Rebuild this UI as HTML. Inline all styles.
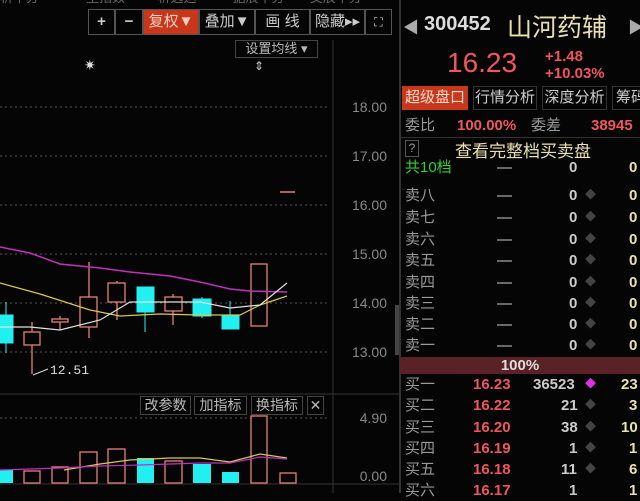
<!DOCTYPE html>
<html><head><meta charset="utf-8"><style>
*{margin:0;padding:0;box-sizing:border-box}
body{width:640px;height:493px;background:#050505;overflow:hidden;position:relative;font-family:"Liberation Sans","Noto Sans CJK SC",sans-serif;color:#ccc}
.a{position:absolute;white-space:nowrap}
.btn{position:absolute;top:9px;height:26px;border:1px solid #555;color:#ccc;font-size:15px;text-align:center;line-height:24px}
.ax{position:absolute;left:345px;width:42px;text-align:right;font-size:14px;color:#888}
.r{position:absolute;left:403px;width:237px;height:21px;font-size:15px;line-height:21px}
.r span{position:absolute}
.r .d{left:182px;color:#444;font-size:11px}
</style></head><body>
<div class="a" style="left:0;top:-13px;font-size:13px;color:#666">析平分 &nbsp;&nbsp;&nbsp;&nbsp;&nbsp;&nbsp;&nbsp;&nbsp;&nbsp;&nbsp;&nbsp; 型指数 &nbsp;&nbsp;&nbsp;&nbsp;&nbsp;&nbsp;&nbsp; 析选运 &nbsp;&nbsp;&nbsp;&nbsp;&nbsp;&nbsp;&nbsp;&nbsp; 据展平分 &nbsp;&nbsp;&nbsp;&nbsp;&nbsp; 交展平分</div>
<div class="btn" style="left:88px;width:27px;font-weight:bold">+</div>
<div class="btn" style="left:115px;width:28px;font-weight:bold">−</div>
<div class="btn" style="left:143px;width:56px;background:#c8361c;color:#f5d0c0">复权▼</div>
<div class="btn" style="left:199px;width:56px">叠加▼</div>
<div class="btn" style="left:255px;width:55px">画 线</div>
<div class="btn" style="left:310px;width:55px">隐藏▸▸</div>
<div class="btn" style="left:365px;width:27px;font-size:12px">⛶</div>
<div class="a" style="left:235px;top:40px;width:83px;height:18px;border:1px solid #444;font-size:13px;line-height:16px;text-align:center;color:#bbb">设置均线 ▾</div>
<svg class="a" style="left:0;top:0" width="400" height="493">
<g stroke="#555" stroke-dasharray="2,3"><line x1="0" y1="107" x2="328" y2="107"/><line x1="0" y1="156" x2="328" y2="156"/><line x1="0" y1="205" x2="328" y2="205"/><line x1="0" y1="254" x2="328" y2="254"/><line x1="0" y1="303" x2="328" y2="303"/><line x1="0" y1="352" x2="328" y2="352"/><line x1="0" y1="418" x2="328" y2="418"/></g>
<line x1="333" y1="40" x2="333" y2="493" stroke="#333"/>
<line x1="0" y1="394" x2="400" y2="394" stroke="#333"/>
<line x1="0" y1="484" x2="400" y2="484" stroke="#333"/>
<rect x="395" y="305" width="4" height="50" fill="#444"/>
<text x="84" y="70" fill="#ddd" font-size="14">✷</text>
<text x="254" y="70" fill="#ccc" font-size="12">⇕</text>
<line x1="280" y1="192" x2="295" y2="192" stroke="#e7807a" stroke-width="1.5"/>
<g stroke="#e7807a" fill="none" stroke-width="1.3">
<line x1="32" y1="322" x2="32" y2="374"/><rect x="24" y="332" width="16" height="13" fill="#050505"/>
<line x1="60" y1="316" x2="60" y2="330"/><rect x="52" y="319" width="16" height="3" fill="#050505"/>
<line x1="89" y1="262" x2="89" y2="338"/><rect x="80" y="297" width="17" height="30" fill="#050505"/>
<line x1="117" y1="281" x2="117" y2="320"/><rect x="108" y="283" width="17" height="19" fill="#050505"/>
<line x1="173" y1="294" x2="173" y2="325"/><rect x="165" y="297" width="17" height="14" fill="#050505"/>
<rect x="251" y="264" width="16" height="62" fill="#050505"/>
</g>
<g fill="#22f0f0" stroke="#22f0f0">
<line x1="6" y1="302" x2="6" y2="353"/><rect x="0" y="315" width="13" height="28"/>
<line x1="145" y1="287" x2="145" y2="332"/><rect x="137" y="287" width="17" height="25"/>
<line x1="202" y1="297" x2="202" y2="318"/><rect x="193" y="299" width="18" height="17"/>
<line x1="230" y1="301" x2="230" y2="329"/><rect x="222" y="316" width="17" height="13"/>
</g>
<polyline fill="none" stroke="#c030c0" stroke-width="1.5" points="0,247 30,253 60,264 100,268 130,272 170,276 200,282 230,289 250,291 287,292"/>
<polyline fill="none" stroke="#d8c850" stroke-width="1.2" points="0,283 40,294 90,310 120,316 160,314 200,315 240,315 260,305 287,296"/>
<polyline fill="none" stroke="#e0e0e0" stroke-width="1.2" points="0,327 30,327 60,330 100,320 130,302 170,302 200,302 230,308 260,305 287,283"/>
<line x1="33" y1="375" x2="48" y2="369" stroke="#ddd"/>
<text x="50" y="374" fill="#ddd" font-size="13" font-family="Liberation Mono">12.51</text>
<g stroke="#e7807a" fill="#050505" stroke-width="1.3">
<rect x="24" y="471" width="16" height="12"/><rect x="52" y="467" width="16" height="16"/><rect x="80" y="452" width="17" height="31"/><rect x="108" y="449" width="17" height="34"/><rect x="165" y="461" width="17" height="22"/><rect x="251" y="416" width="16" height="67"/><rect x="280" y="473" width="16" height="10"/>
</g>
<g fill="#22f0f0"><rect x="0" y="470" width="13" height="13"/><rect x="137" y="458" width="17" height="25"/><rect x="193" y="464" width="18" height="19"/><rect x="222" y="472" width="17" height="11"/></g>
<polyline fill="none" stroke="#d8c850" stroke-width="1.2" points="64,470 100,464 130,460 170,458 200,458 230,462 260,454 287,458"/>
<polyline fill="none" stroke="#c030c0" stroke-width="1.2" points="0,470 60,468 100,466 140,465 200,463 230,463 260,457 287,459"/>
</svg>
<div class="ax" style="top:99px">18.00</div><div class="ax" style="top:148px">17.00</div><div class="ax" style="top:197px">16.00</div><div class="ax" style="top:246px">15.00</div><div class="ax" style="top:295px">14.00</div><div class="ax" style="top:344px">13.00</div><div class="ax" style="top:410px">4.90</div><div class="ax" style="top:468px">0.00</div>
<div class="a" style="left:140px;top:396px;width:51px;height:19px;border:1px solid #444;font-size:14px;line-height:17px;text-align:center;color:#bbb">改参数</div>
<div class="a" style="left:194px;top:396px;width:53px;height:19px;border:1px solid #444;font-size:14px;line-height:17px;text-align:center;color:#bbb">加指标</div>
<div class="a" style="left:251px;top:396px;width:52px;height:19px;border:1px solid #444;font-size:14px;line-height:17px;text-align:center;color:#bbb">换指标</div>
<div class="a" style="left:307px;top:396px;width:17px;height:19px;border:1px solid #444;font-size:14px;line-height:17px;text-align:center;color:#bbb">✕</div>
<div class="a" style="left:399px;top:0;width:2px;height:493px;background:#333"></div>
<div class="a" style="left:403px;top:14px;color:#aaa;font-size:16px">◀</div>
<div class="a" style="left:628px;top:14px;color:#aaa;font-size:16px">▶</div>
<div class="a" style="left:424px;top:13px;font-size:20px;color:#ddd;font-weight:bold">300452</div>
<div class="a" style="left:507px;top:8px;font-size:25px;color:#e8e0b0">山河药辅</div>
<div class="a" style="left:447px;top:47px;font-size:28px;color:#f05560">16.23</div>
<div class="a" style="left:545px;top:48px;font-size:15px;color:#f05560;font-weight:bold;line-height:17px">+1.48<br>+10.03%</div>
<div class="a" style="left:402px;top:86px;width:66px;height:24px;background:#c8361c;color:#f5e0d0;font-size:15px;line-height:24px;text-align:center">超级盘口</div>
<div class="a" style="left:473px;top:86px;width:64px;height:24px;border:1px solid #333;font-size:15px;line-height:22px;text-align:center">行情分析</div>
<div class="a" style="left:542px;top:86px;width:65px;height:24px;border:1px solid #333;font-size:15px;line-height:22px;text-align:center">深度分析</div>
<div class="a" style="left:612px;top:86px;width:40px;height:24px;border:1px solid #333;font-size:15px;line-height:22px;padding-left:3px">筹码</div>
<div class="r" style="top:115px"><span style="left:2px;color:#999">委比</span><span style="left:54px;color:#f05560;font-weight:bold">100.00%</span><span style="left:128px;color:#999">委差</span><span style="left:188px;color:#f05560;font-weight:bold">38945</span></div>
<div class="a" style="left:400px;top:137px;width:240px;height:1px;background:#333"></div>
<div class="a" style="left:405px;top:140px;width:14px;height:17px;border:1px solid #555;font-size:12px;text-align:center;color:#999">?</div>
<div class="a" style="left:455px;top:137px;font-size:17px;color:#e8e0b0">查看完整档买卖盘</div>
<div class="r" style="top:157px"><span style="left:2px;color:#3c3">共10档</span><span style="left:94px">—</span><span style="left:166px;font-weight:bold">0</span><span style="left:226px;color:#e8e0b0;font-weight:bold">0</span></div>
<div class="r" style="top:185px"><span style="left:2px;color:#999">卖八</span><span style="left:94px">—</span><span style="left:166px;font-weight:bold">0</span><span class="d">◆</span><span style="left:226px;color:#e8e0b0;font-weight:bold">0</span></div>
<div class="r" style="top:207px"><span style="left:2px;color:#999">卖七</span><span style="left:94px">—</span><span style="left:166px;font-weight:bold">0</span><span class="d">◆</span><span style="left:226px;color:#e8e0b0;font-weight:bold">0</span></div>
<div class="r" style="top:229px"><span style="left:2px;color:#999">卖六</span><span style="left:94px">—</span><span style="left:166px;font-weight:bold">0</span><span class="d">◆</span><span style="left:226px;color:#e8e0b0;font-weight:bold">0</span></div>
<div class="r" style="top:250px"><span style="left:2px;color:#999">卖五</span><span style="left:94px">—</span><span style="left:166px;font-weight:bold">0</span><span class="d">◆</span><span style="left:226px;color:#e8e0b0;font-weight:bold">0</span></div>
<div class="r" style="top:272px"><span style="left:2px;color:#999">卖四</span><span style="left:94px">—</span><span style="left:166px;font-weight:bold">0</span><span class="d">◆</span><span style="left:226px;color:#e8e0b0;font-weight:bold">0</span></div>
<div class="r" style="top:293px"><span style="left:2px;color:#999">卖三</span><span style="left:94px">—</span><span style="left:166px;font-weight:bold">0</span><span class="d">◆</span><span style="left:226px;color:#e8e0b0;font-weight:bold">0</span></div>
<div class="r" style="top:314px"><span style="left:2px;color:#999">卖二</span><span style="left:94px">—</span><span style="left:166px;font-weight:bold">0</span><span class="d">◆</span><span style="left:226px;color:#e8e0b0;font-weight:bold">0</span></div>
<div class="r" style="top:335px"><span style="left:2px;color:#999">卖一</span><span style="left:94px">—</span><span style="left:166px;font-weight:bold">0</span><span class="d">◆</span><span style="left:226px;color:#e8e0b0;font-weight:bold">0</span></div>
<div class="a" style="left:400px;top:357px;width:240px;height:17px;background:#5a2226;color:#ddd;font-size:15px;font-weight:bold;text-align:center;line-height:17px">100%</div>
<div class="r" style="top:374px"><span style="left:2px;color:#999">买一</span><span style="left:70px;color:#f05560;font-weight:bold">16.23</span><span style="left:130px;font-weight:bold">36523</span><span style="left:182px;color:#e030e0;font-size:11px">◆</span><span style="left:218px;color:#e8e0b0;font-weight:bold">23</span></div>
<div class="r" style="top:395px"><span style="left:2px;color:#999">买二</span><span style="left:70px;color:#f05560;font-weight:bold">16.22</span><span style="left:158px;font-weight:bold">21</span><span class="d">◆</span><span style="left:226px;color:#e8e0b0;font-weight:bold">3</span></div>
<div class="r" style="top:417px"><span style="left:2px;color:#999">买三</span><span style="left:70px;color:#f05560;font-weight:bold">16.20</span><span style="left:158px;font-weight:bold">38</span><span class="d">◆</span><span style="left:218px;color:#e8e0b0;font-weight:bold">10</span></div>
<div class="r" style="top:438px"><span style="left:2px;color:#999">买四</span><span style="left:70px;color:#f05560;font-weight:bold">16.19</span><span style="left:166px;font-weight:bold">1</span><span class="d">◆</span><span style="left:226px;color:#e8e0b0;font-weight:bold">1</span></div>
<div class="r" style="top:459px"><span style="left:2px;color:#999">买五</span><span style="left:70px;color:#f05560;font-weight:bold">16.18</span><span style="left:158px;font-weight:bold">11</span><span class="d">◆</span><span style="left:226px;color:#e8e0b0;font-weight:bold">6</span></div>
<div class="r" style="top:480px"><span style="left:2px;color:#999">买六</span><span style="left:70px;color:#f05560;font-weight:bold">16.17</span><span style="left:166px;font-weight:bold">1</span><span style="left:226px;color:#e8e0b0;font-weight:bold">1</span></div>
</body></html>
